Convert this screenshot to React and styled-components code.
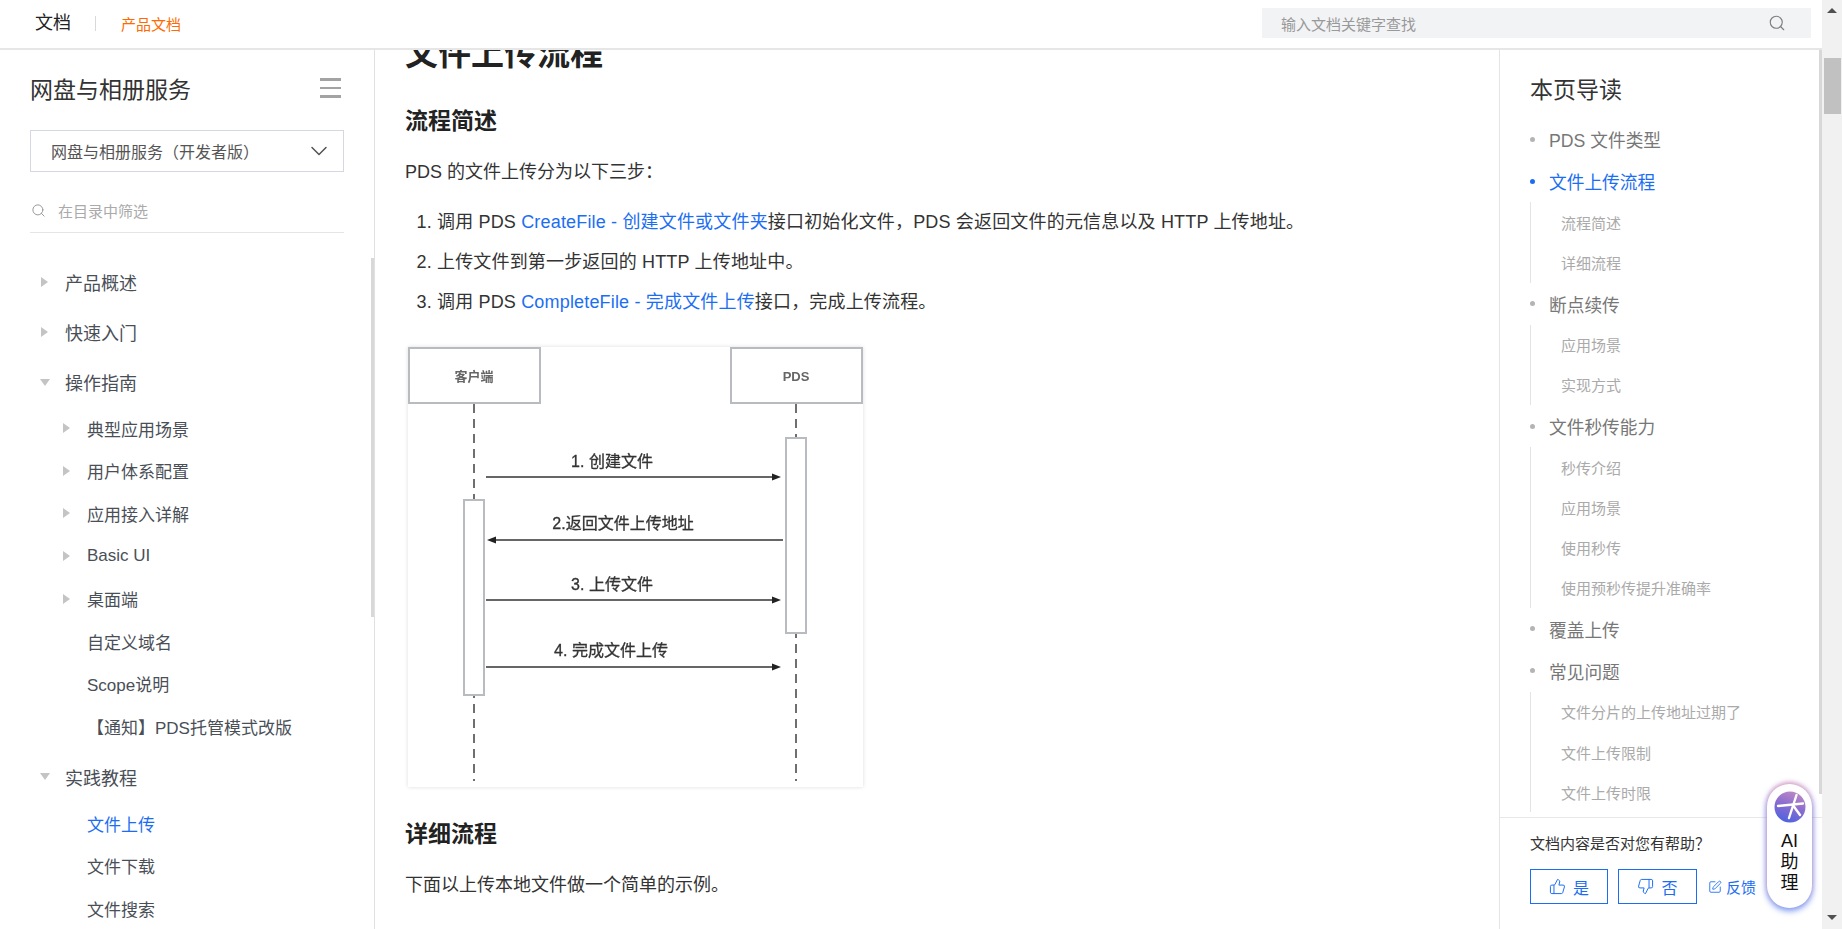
import React from 'react';
import styled, { createGlobalStyle } from 'styled-components';
import { Search, ChevronDown, ThumbsUp, ThumbsDown, SquarePen } from 'lucide-react';

const GlobalStyle = createGlobalStyle`
    html, body {
        margin: 0;
        height: 100%;
        overflow: hidden;
        background: #fff;
        font-family: "Liberation Sans", "Noto Sans CJK SC", sans-serif;
    }
    * { box-sizing: border-box; }
`;

const Shell = styled.div`
    display: flex;
    width: 1842px;
    height: 929px;
    position: relative;
    overflow: hidden;
`;

const Page = styled.div`
    flex: 1;
    min-width: 0;
    display: flex;
    flex-direction: column;
`;

const PageScroll = styled.div`
    width: 20px;
    background: #f1f1f1;
    display: flex;
    flex-direction: column;
    align-items: center;
    padding-top: 8px;
    flex: none;
`;

const ScrollArrow = styled.div`
    width: 0;
    height: 0;
    border-left: 5px solid transparent;
    border-right: 5px solid transparent;
    border-${p => (p.$down ? 'top' : 'bottom')}: 5px solid #505050;
    margin-top: ${p => (p.$down ? 'auto' : '0')};
    margin-bottom: ${p => (p.$down ? '9px' : '0')};
`;

const ScrollThumb = styled.div`
    width: 17px;
    height: 56px;
    margin-top: 45px;
    margin-left: 1px;
    background: #c1c1c1;
`;

const Header = styled.header`
    height: 50px;
    flex: none;
    border-bottom: 2px solid #e6e6e6;
    display: flex;
    align-items: center;
    padding: 0 11px 2px 35px;
`;

const Brand = styled.div`
    font-size: 18px;
    color: #222;
    line-height: 1;
`;

const HeaderDivider = styled.div`
    width: 1px;
    height: 15px;
    background: #d9d9d9;
    margin: 0 25px 0 24px;
`;

const ProductLink = styled.div`
    font-size: 15px;
    color: #ff6a00;
`;

const SearchBox = styled.div`
    margin-left: auto;
    width: 549px;
    height: 30px;
    background: #f2f3f5;
    display: flex;
    align-items: center;
    justify-content: space-between;
    padding: 0 25px 0 19px;
    font-size: 15px;
    color: #999;
    svg { color: #7d7d7d; }
`;

const Body = styled.div`
    flex: 1;
    min-height: 0;
    display: flex;
`;

const Sidebar = styled.aside`
    width: 375px;
    flex: none;
    border-right: 1px solid #e0e0e0;
    padding: 18px 30px 0;
    overflow: hidden;
    position: relative;
`;

const SideTitleRow = styled.div`
    height: 40px;
    display: flex;
    align-items: center;
    justify-content: space-between;
    padding-right: 3px;
`;

const SideTitle = styled.div`
    font-size: 23px;
    color: #333;
`;

const Burger = styled.div`
    width: 21px;
    display: flex;
    flex-direction: column;
    gap: 6px;
    span {
        display: block;
        height: 2.5px;
        background: #a3a3a3;
    }
`;

const SelectBox = styled.div`
    height: 42px;
    margin-top: 22px;
    border: 1px solid #d5d8e0;
    display: flex;
    align-items: center;
    justify-content: space-between;
    padding: 0 10px 0 20px;
    font-size: 16px;
    color: #555;
    svg { color: #555; }
`;

const FilterRow = styled.div`
    height: 45px;
    margin-top: 16px;
    border-bottom: 1px solid #e5e5e5;
    display: flex;
    align-items: center;
    gap: 12px;
    padding-left: 1px;
    font-size: 15px;
    color: #aaa;
    svg { color: #999; }
`;

const Tree = styled.div`
    margin-top: 24px;
`;

const TreeRow = styled.div`
    height: ${p => (p.$level === 2 ? '42.6px' : '50px')};
    display: flex;
    align-items: center;
    font-size: ${p => (p.$level === 2 ? '17px' : '18px')};
    color: ${p => (p.$active ? '#1b6ef3' : '#4a4f57')};
    padding-left: ${p => (p.$level === 2 ? '57px' : '35px')};
    margin-bottom: ${p => (p.$gap ? '4px' : '0')};
    position: relative;
`;

const Caret = styled.span`
    position: absolute;
    left: ${p => (p.$level === 2 ? '33px' : '11px')};
    width: 0;
    height: 0;
    ${p => p.$open ? `
        border-left: 5px solid transparent;
        border-right: 5px solid transparent;
        border-top: 7px solid #c4c4c4;
        margin-left: -1px;
    ` : `
        border-top: 5px solid transparent;
        border-bottom: 5px solid transparent;
        border-left: 7px solid #c4c4c4;
    `}
`;

const SideScroll = styled.div`
    position: absolute;
    right: 0;
    top: 208px;
    width: 3px;
    height: 359px;
    background: #d8d8d8;
`;

const Main = styled.main`
    flex: 1;
    min-width: 0;
    overflow: hidden;
    padding-left: 30px;
`;

const H1 = styled.h1`
    margin: -18px 0 0;
    font-size: 33px;
    line-height: 44px;
    font-weight: 700;
    color: #222;
`;

const H2 = styled.h2`
    margin: ${p => p.$top}px 0 0;
    font-size: 23px;
    line-height: 32px;
    font-weight: 700;
    color: #222;
`;

const Para = styled.p`
    margin: 21px 0 0;
    font-size: 18px;
    line-height: 28px;
    color: #333;
`;

const Steps = styled.ol`
    margin: 22px 0 0;
    padding: 0 0 0 32px;
    font-size: 18px;
    line-height: 28px;
    letter-spacing: 0.17px;
    color: #333;
    li + li { margin-top: 12px; }
    a { color: #1b6ef3; text-decoration: none; }
`;

const Figure = styled.div`
    margin: 31px 0 0 3px;
    width: 455px;
    height: 440px;
    background: #fff;
    box-shadow: 0 0 4px rgba(0, 0, 0, 0.14);
    svg {
        display: block;
        filter: blur(0.4px);
    }
`;

const Toc = styled.aside`
    width: 323px;
    flex: none;
    border-left: 1px solid #e4e4e4;
    display: flex;
    flex-direction: column;
    position: relative;
`;

const TocBody = styled.div`
    flex: 1;
    min-height: 0;
    overflow: hidden;
    padding: 18px 0 0 30px;
`;

const TocTitle = styled.div`
    height: 40px;
    margin-bottom: 10px;
    display: flex;
    align-items: center;
    font-size: 23px;
    color: #333;
`;

const TocItem = styled.div`
    height: 42.2px;
    display: flex;
    align-items: center;
    gap: 14px;
    font-size: 17.7px;
    color: ${p => (p.$active ? '#1b6ef3' : '#777')};
    &::before {
        content: "";
        width: 5px;
        height: 5px;
        border-radius: 50%;
        background: ${p => (p.$active ? '#1b6ef3' : '#b4b4b4')};
    }
`;

const TocSub = styled.div`
    border-left: 1px solid #e4e4e4;
    padding-left: 30px;
`;

const TocSubItem = styled.div`
    height: 40.1px;
    display: flex;
    align-items: center;
    font-size: 15px;
    color: #aaa;
`;

const TocScroll = styled.div`
    position: absolute;
    right: 0;
    top: 0;
    width: 3px;
    height: 744px;
    background: #d8d8d8;
`;

const Feedback = styled.div`
    height: 112px;
    flex: none;
    border-top: 1px solid #e8e8e8;
    padding: 16px 0 0 30px;
`;

const Question = styled.div`
    font-size: 15px;
    line-height: 20px;
    color: #333;
`;

const FeedbackRow = styled.div`
    display: flex;
    align-items: center;
    margin-top: 15px;
`;

const VoteButton = styled.div`
    width: ${p => p.$w}px;
    height: 35px;
    border: 1px solid #1b6ef3;
    color: #1b6ef3;
    font-size: 16px;
    display: flex;
    align-items: center;
    justify-content: center;
    gap: 7px;
    margin-right: 10px;
`;

const ReportLink = styled.div`
    display: flex;
    align-items: center;
    gap: 4px;
    color: #1b6ef3;
    font-size: 15px;
    margin-left: 1px;
`;

const AiBubble = styled.div`
    position: absolute;
    left: 1767px;
    top: 784px;
    width: 45px;
    height: 124px;
    border-radius: 23px;
    background: #fff;
    box-shadow: 0 -2px 4px rgba(230, 130, 160, 0.55), 0 3px 6px rgba(70, 120, 240, 0.65), 0 0 6px rgba(130, 120, 230, 0.45);
    display: flex;
    flex-direction: column;
    align-items: center;
    padding-top: 7px;
`;

const AiText = styled.div`
    width: 20px;
    margin-top: 8px;
    font-size: 18px;
    line-height: 21px;
    text-align: center;
    color: #111;
`;

const treeData = [
    { label: '产品概述', level: 1, caret: 'closed' },
    { label: '快速入门', level: 1, caret: 'closed' },
    { label: '操作指南', level: 1, caret: 'open' },
    { label: '典型应用场景', level: 2, caret: 'closed' },
    { label: '用户体系配置', level: 2, caret: 'closed' },
    { label: '应用接入详解', level: 2, caret: 'closed' },
    { label: 'Basic UI', level: 2, caret: 'closed' },
    { label: '桌面端', level: 2, caret: 'closed' },
    { label: '自定义域名', level: 2 },
    { label: 'Scope说明', level: 2 },
    { label: '【通知】PDS托管模式改版', level: 2, gap: true },
    { label: '实践教程', level: 1, caret: 'open' },
    { label: '文件上传', level: 2, active: true },
    { label: '文件下载', level: 2 },
    { label: '文件搜索', level: 2 },
];

const tocData = [
    { label: 'PDS 文件类型' },
    { label: '文件上传流程', active: true, subs: ['流程简述', '详细流程'] },
    { label: '断点续传', subs: ['应用场景', '实现方式'] },
    { label: '文件秒传能力', subs: ['秒传介绍', '应用场景', '使用秒传', '使用预秒传提升准确率'] },
    { label: '覆盖上传' },
    { label: '常见问题', subs: ['文件分片的上传地址过期了', '文件上传限制', '文件上传时限'] },
];

const arrows = [
    { y: 130, x1: 78, x2: 373, label: '1. 创建文件', cx: 204, ty: 120 },
    { y: 193, x1: 375, x2: 79, label: '2.返回文件上传地址', cx: 215, ty: 182 },
    { y: 253, x1: 78, x2: 373, label: '3. 上传文件', cx: 204, ty: 243 },
    { y: 320, x1: 78, x2: 373, label: '4. 完成文件上传', cx: 203, ty: 309 },
];

const SequenceDiagram = () => (
    <svg width="455" height="440" viewBox="0 0 455 440" fontFamily="'Liberation Sans', 'Noto Sans CJK SC', sans-serif">
        <g fill="#fff" stroke="#b8bcc0" strokeWidth="2">
            <rect x="1" y="1" width="131" height="55" />
            <rect x="323" y="1" width="131" height="55" />
        </g>
        <text x="66" y="34" textAnchor="middle" fontSize="13" fontWeight="700" fill="#666">客户端</text>
        <text x="388" y="34" textAnchor="middle" fontSize="13" fontWeight="700" fill="#666">PDS</text>
        <g stroke="#6f6f6f" strokeWidth="2" strokeDasharray="9 6">
            <line x1="66" y1="57" x2="66" y2="434" />
            <line x1="388" y1="57" x2="388" y2="434" />
        </g>
        <g fill="#fff" stroke="#b8bcc0" strokeWidth="2">
            <rect x="378" y="91" width="20" height="195" />
            <rect x="56" y="153" width="20" height="195" />
        </g>
        {arrows.map(a => {
            const dir = a.x2 > a.x1 ? 1 : -1;
            return (
                <g key={a.label}>
                    <line x1={a.x1} y1={a.y} x2={a.x2 - dir * 6} y2={a.y} stroke="#333" strokeWidth="1.4" />
                    <polygon points={`${a.x2},${a.y} ${a.x2 - dir * 9},${a.y - 3.5} ${a.x2 - dir * 9},${a.y + 3.5}`} fill="#222" />
                    <text x={a.cx} y={a.ty} textAnchor="middle" fontSize="16" fill="#333" stroke="#333" strokeWidth="0.3">{a.label}</text>
                </g>
            );
        })}
    </svg>
);

const AiLogo = () => (
    <svg width="32" height="32" viewBox="0 0 32 32">
        <defs>
            <linearGradient id="aiGrad" x1="0.75" y1="0" x2="0.4" y2="1">
                <stop offset="0" stopColor="#c08ac4" />
                <stop offset="0.5" stopColor="#8a6cd0" />
                <stop offset="1" stopColor="#4f63de" />
            </linearGradient>
        </defs>
        <circle cx="16" cy="16" r="15.5" fill="url(#aiGrad)" />
        <g stroke="#fff" strokeWidth="2.4" strokeLinecap="round" fill="none">
            <path d="M4 15 L29 12.5" />
            <path d="M22.5 4 L15 27" />
            <path d="M19.5 15 L26 24" />
        </g>
    </svg>
);

const App = () => (
    <Shell>
        <GlobalStyle />
        <Page>
            <Header>
                <Brand>文档</Brand>
                <HeaderDivider />
                <ProductLink>产品文档</ProductLink>
                <SearchBox>
                    输入文档关键字查找
                    <Search size={18} strokeWidth={1.5} />
                </SearchBox>
            </Header>
            <Body>
                <Sidebar>
                    <SideTitleRow>
                        <SideTitle>网盘与相册服务</SideTitle>
                        <Burger><span /><span /><span /></Burger>
                    </SideTitleRow>
                    <SelectBox>
                        网盘与相册服务（开发者版）
                        <ChevronDown size={28} strokeWidth={1.3} />
                    </SelectBox>
                    <FilterRow>
                        <Search size={15} strokeWidth={1.6} />
                        在目录中筛选
                    </FilterRow>
                    <Tree>
                        {treeData.map(item => (
                            <TreeRow key={item.label} $level={item.level} $active={item.active} $gap={item.gap}>
                                {item.caret && <Caret $level={item.level} $open={item.caret === 'open'} />}
                                {item.label}
                            </TreeRow>
                        ))}
                    </Tree>
                    <SideScroll />
                </Sidebar>
                <Main>
                    <H1>文件上传流程</H1>
                    <H2 $top={29}>流程简述</H2>
                    <Para>PDS 的文件上传分为以下三步：</Para>
                    <Steps>
                        <li>调用 PDS <a href="#create">CreateFile - 创建文件或文件夹</a>接口初始化文件，PDS 会返回文件的元信息以及 HTTP 上传地址。</li>
                        <li>上传文件到第一步返回的 HTTP 上传地址中。</li>
                        <li>调用 PDS <a href="#complete">CompleteFile - 完成文件上传</a>接口，完成上传流程。</li>
                    </Steps>
                    <Figure><SequenceDiagram /></Figure>
                    <H2 $top={31}>详细流程</H2>
                    <Para>下面以上传本地文件做一个简单的示例。</Para>
                </Main>
                <Toc>
                    <TocBody>
                        <TocTitle>本页导读</TocTitle>
                        {tocData.map(item => (
                            <React.Fragment key={item.label}>
                                <TocItem $active={item.active}>{item.label}</TocItem>
                                {item.subs && (
                                    <TocSub>
                                        {item.subs.map(s => <TocSubItem key={s}>{s}</TocSubItem>)}
                                    </TocSub>
                                )}
                            </React.Fragment>
                        ))}
                    </TocBody>
                    <Feedback>
                        <Question>文档内容是否对您有帮助？</Question>
                        <FeedbackRow>
                            <VoteButton $w={78}><ThumbsUp size={17} strokeWidth={1.4} />是</VoteButton>
                            <VoteButton $w={79}><ThumbsDown size={17} strokeWidth={1.4} />否</VoteButton>
                            <ReportLink><SquarePen size={14} strokeWidth={1.5} />反馈</ReportLink>
                        </FeedbackRow>
                    </Feedback>
                    <TocScroll />
                </Toc>
            </Body>
        </Page>
        <PageScroll>
            <ScrollArrow />
            <ScrollThumb />
            <ScrollArrow $down />
        </PageScroll>
        <AiBubble>
            <AiLogo />
            <AiText>AI 助理</AiText>
        </AiBubble>
    </Shell>
);

export default App;
